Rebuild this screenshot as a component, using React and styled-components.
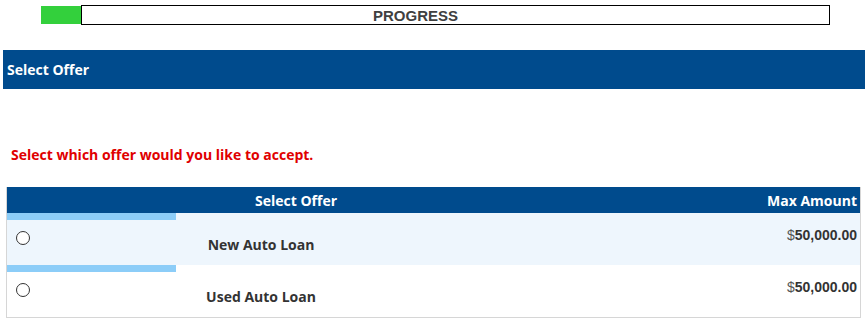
import styled, { createGlobalStyle } from "styled-components";

const GlobalStyle = createGlobalStyle`
  body {
    margin: 0;
    background: #fff;
    font-family: "Open Sans", "Liberation Sans", Arial, sans-serif;
  }
`;

const offers = [
  { id: "new", name: "New Auto Loan", amount: "50,000.00", shaded: true },
  { id: "used", name: "Used Auto Loan", amount: "50,000.00", shaded: false },
];

export default function App() {
  return (
    <Page>
      <GlobalStyle />
      <ProgressWrap>
        <ProgressFill />
        <ProgressBox>PROGRESS</ProgressBox>
      </ProgressWrap>
      <SectionBar>Select Offer</SectionBar>
      <Notice>Select which offer would you like to accept.</Notice>
      <OfferTable>
        <HeaderRow>
          <HeaderCell>Select Offer</HeaderCell>
          <HeaderCell $align="right">Max Amount</HeaderCell>
        </HeaderRow>
        {offers.map((offer) => (
          <OfferRow key={offer.id} $shaded={offer.shaded}>
            <RadioCell>
              <Strip />
              <Radio type="radio" name="offer" value={offer.id} />
            </RadioCell>
            <NameCell>{offer.name}</NameCell>
            <AmountCell>
              <Dollar>$</Dollar>
              {offer.amount}
            </AmountCell>
          </OfferRow>
        ))}
      </OfferTable>
    </Page>
  );
}

const Page = styled.div`
  padding: 5px 0 0 3px;
`;

const ProgressWrap = styled.div`
  display: flex;
  margin-left: 38px;
  width: 789px;
  height: 20px;
`;

const ProgressFill = styled.div`
  width: 40px;
  margin: 1px 0;
  background: #33d03c;
`;

const ProgressBox = styled.div`
  flex: 1;
  border: 1px solid #000;
  box-sizing: border-box;
  display: flex;
  align-items: center;
  justify-content: center;
  padding-right: 80px;
  font-family: "Liberation Sans", Arial, sans-serif;
  font-weight: bold;
  font-size: 15px;
  color: #404040;
`;

const SectionBar = styled.div`
  margin-top: 25px;
  height: 39px;
  background: #004b8d;
  color: #fff;
  font-weight: bold;
  font-size: 14px;
  display: flex;
  align-items: center;
  padding-left: 4px;
`;

const Notice = styled.div`
  margin: 56px 0 0 8px;
  color: #e00000;
  font-weight: bold;
  font-size: 14px;
  line-height: 20px;
`;

const OfferTable = styled.div`
  margin: 22px 0 0 3px;
  width: 855px;
  border: 1px solid #d6d6d6;
  border-top: 0;
  box-sizing: border-box;
`;

const HeaderRow = styled.div`
  display: grid;
  grid-template-columns: 1fr 275px;
  height: 26px;
  background: #004b8d;
  color: #fff;
  font-weight: bold;
  font-size: 14px;
  align-items: center;
`;

const HeaderCell = styled.div`
  text-align: ${(p) => p.$align || "center"};
  padding-right: ${(p) => (p.$align === "right" ? "3px" : "0")};
`;

const OfferRow = styled.div`
  display: grid;
  grid-template-columns: 169px 170px 1fr;
  height: 52px;
  background: ${(p) => (p.$shaded ? "#eef6fd" : "#fff")};
`;

const RadioCell = styled.div`
  display: flex;
  flex-direction: column;
`;

const Strip = styled.div`
  height: 7px;
  background: #8ccdf8;
`;

const Radio = styled.input`
  appearance: none;
  width: 14px;
  height: 14px;
  margin: 11px 0 0 9px;
  border: 1px solid #333;
  border-radius: 50%;
  background: #fff;
  box-sizing: border-box;
`;

const NameCell = styled.div`
  padding-top: 22px;
  text-align: center;
  font-weight: bold;
  font-size: 14px;
  color: #333;
`;

const AmountCell = styled.div`
  padding: 14px 3px 0 0;
  text-align: right;
  font-family: "Liberation Sans", Arial, sans-serif;
  font-weight: bold;
  font-size: 14px;
  color: #333;
`;

const Dollar = styled.span`
  font-weight: normal;
  color: #555;
`;
